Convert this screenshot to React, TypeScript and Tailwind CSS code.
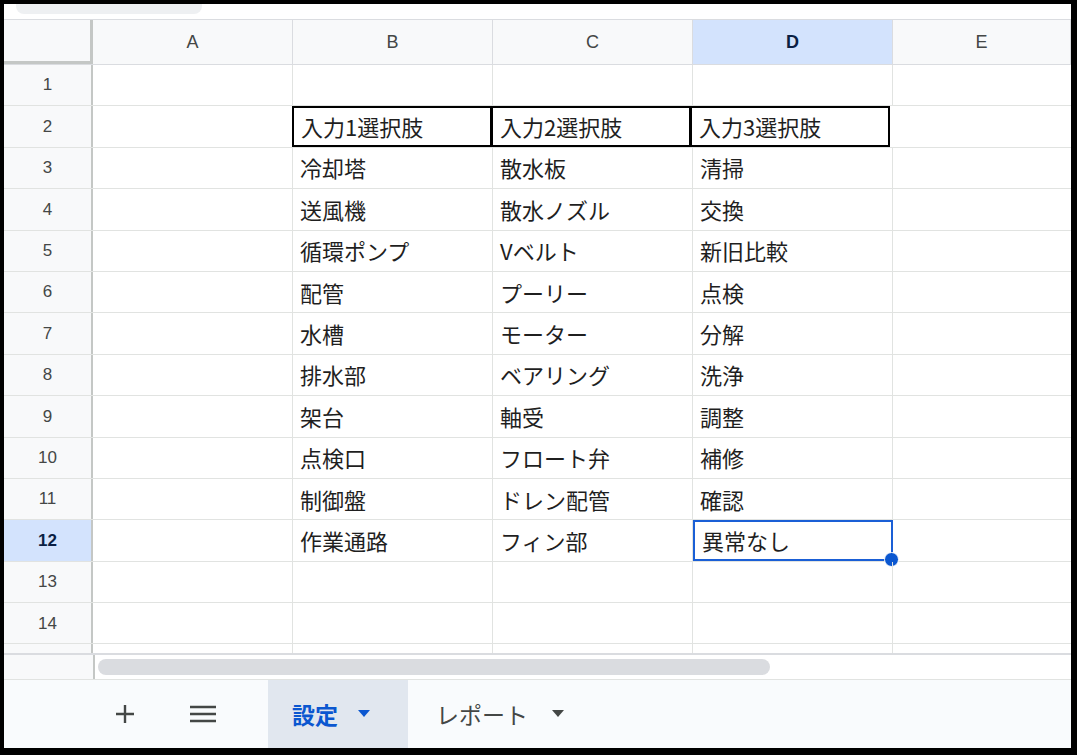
const cols = ["A", "B", "C", "D", "E"];
const widths = ["w-[200px]", "w-[200px]", "w-[200px]", "w-[200px]", "flex-1"];
const data: string[][] = [
  ["", "", "", ""],
  ["入力1選択肢", "入力2選択肢", "入力3選択肢"],
  ["冷却塔", "散水板", "清掃"],
  ["送風機", "散水ノズル", "交換"],
  ["循環ポンプ", "Vベルト", "新旧比較"],
  ["配管", "プーリー", "点検"],
  ["水槽", "モーター", "分解"],
  ["排水部", "ベアリング", "洗浄"],
  ["架台", "軸受", "調整"],
  ["点検口", "フロート弁", "補修"],
  ["制御盤", "ドレン配管", "確認"],
  ["作業通路", "フィン部", "異常なし"],
  ["", "", ""],
  ["", "", ""],
];

export default function App() {
  return (
    <div
      className="w-[1077px] h-[755px] bg-black p-[4px] pr-[6px] pb-[7px] overflow-hidden"
      style={{ fontFamily: '"Noto Sans CJK JP", "Liberation Sans", sans-serif' }}
    >
      <div className="w-full h-full bg-white flex flex-col overflow-hidden">
        <div className="h-[15px] flex items-start pl-[12px] bg-white">
          <div className="w-[186px] h-[10px] bg-[#eef0f2] rounded-b-[8px]" />
        </div>
        {/* header */}
        <div className="flex h-[46px] bg-[#f8f9fa] border-y border-[#dadce0]">
          <div className="w-[89px] bg-[#f8f9fa] border-r-[3px] border-b-[3px] border-[#c4c7c5]" />
          {cols.map((c, i) => (
            <div
              key={c}
              className={`${widths[i]} flex items-center justify-center border-r border-[#dadce0] text-[18px] ${
                c === "D" ? "bg-[#d3e3fd] font-bold text-[#0b1f44]" : "text-[#444746]"
              }`}
              style={{ fontFamily: '"Liberation Sans", sans-serif' }}
            >
              {c}
            </div>
          ))}
        </div>
        {/* rows */}
        <div className="flex flex-col flex-1 overflow-hidden">
          {data.map((r, ri) => (
            <div key={ri} className="flex h-[41.4px] shrink-0 border-b border-[#e1e3e1]">
              <div
                className={`w-[89px] flex items-center justify-center border-r-[2px] border-[#c4c7c5] text-[17px] ${
                  ri === 11 ? "bg-[#d3e3fd] font-bold text-[#0b1f44]" : "bg-[#f8f9fa] text-[#444746]"
                }`}
                style={{ fontFamily: '"Liberation Sans", sans-serif' }}
              >
                {ri + 1}
              </div>
              <div className="w-[200px] border-r border-[#e1e3e1]" />
              {[0, 1, 2].map((ci) => {
                const v = r[ci] || "";
                const boxed = ri === 1;
                const sel = ri === 11 && ci === 2;
                return (
                  <div
                    key={ci}
                    className={`relative w-[200px] flex items-center pl-[7px] text-[22px] text-[#1f1f1f] ${
                      boxed ? "border-[2px] border-black -ml-px" : sel ? "border-[2px] border-[#1a5fd6]" : "border-r border-[#e1e3e1]"
                    }`}
                  >
                    {v}
                    {sel && (
                      <span className="absolute -right-[8px] -bottom-[8px] w-[15px] h-[15px] rounded-full bg-[#0b57d0] border border-white" />
                    )}
                  </div>
                );
              })}
              <div className="flex-1" />
            </div>
          ))}
          <div className="flex h-[10px] shrink-0">
            <div className="w-[89px] bg-[#f8f9fa] border-r-[2px] border-[#c4c7c5]" />
            {[0, 1, 2, 3].map((i) => (
              <div key={i} className="w-[200px] border-r border-[#e1e3e1]" />
            ))}
          </div>
        </div>
        {/* scrollbar */}
        <div className="h-[26px] flex border-t-[2px] border-[#dadce0] bg-[#f8f9fa] shrink-0">
          <div className="w-[91px] border-r-[2px] border-[#c4c7c5]" />
          <div className="flex-1 bg-white flex items-center pl-[3px]">
            <div className="w-[672px] h-[16px] rounded-full bg-[#dadce0]" />
          </div>
        </div>
        {/* tabs */}
        <div className="h-[69px] bg-[#f9fbfd] border-t border-[#e1e3e1] flex items-center shrink-0">
          <div className="w-[110px]" />
          <svg width="22" height="22" viewBox="0 0 22 22" className="mr-[52px]">
            <path d="M11 2v18M2 11h18" stroke="#444746" strokeWidth="2.4" />
          </svg>
          <svg width="30" height="22" viewBox="0 0 30 22" className="mr-[50px]">
            <path d="M2 4h26M2 11h26M2 18h26" stroke="#444746" strokeWidth="2.6" />
          </svg>
          <div className="h-full w-[140px] bg-[#e1e7ef] flex items-center pl-[24px] gap-[20px] text-[#0b57d0] font-bold text-[23px]">
            設定
            <svg width="12" height="8" viewBox="0 0 12 8"><path d="M0 0h12L6 7z" fill="#0b57d0" /></svg>
          </div>
          <div className="flex items-center pl-[28px] gap-[24px] text-[#444746] text-[23px]">
            レポート
            <svg width="12" height="8" viewBox="0 0 12 8"><path d="M0 0h12L6 7z" fill="#444746" /></svg>
          </div>
        </div>
      </div>
    </div>
  );
}
